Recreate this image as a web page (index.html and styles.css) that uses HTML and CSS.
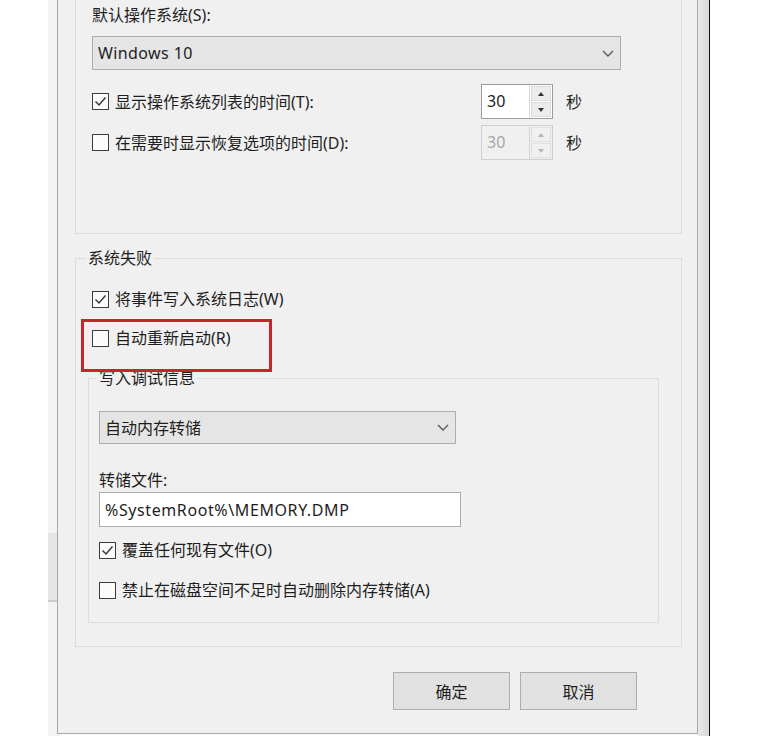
FILE: index.html
```html
<!DOCTYPE html>
<html lang="zh-CN">
<head>
    <meta charset="UTF-8">
    <meta name="viewport" content="width=device-width, initial-scale=1.0">
    <title>启动和故障恢复</title>
    <link rel="stylesheet" href="styles.css">
</head>
<body>
    <div class="back-window">
        <div class="back-tab"></div>
    </div>

    <div class="dialog">
        <div class="group group-boot">
            <div class="field-label">默认操作系统(S):</div>
            <div class="select select-os">
                <span class="latin">Windows 10</span>
                <svg class="chevron" width="12" height="7" viewBox="0 0 12 7"><polyline points="1,1 6,6 11,1" /></svg>
            </div>
            <div class="timer-row">
                <label class="check timer-check">
                    <span class="box"><svg width="15" height="15" viewBox="0 0 15 15"><polyline points="2.5,7.5 6,11 12.5,3.5" /></svg></span>
                    显示操作系统列表的时间(T):
                </label>
                <div class="spinner">
                    <span class="spin-value">30</span>
                    <span class="spin-buttons">
                        <span class="spin-btn"><span class="arrow-up"></span></span>
                        <span class="spin-btn"><span class="arrow-down"></span></span>
                    </span>
                </div>
                <span class="unit">秒</span>
            </div>
            <div class="timer-row">
                <label class="check timer-check">
                    <span class="box"></span>
                    在需要时显示恢复选项的时间(D):
                </label>
                <div class="spinner disabled">
                    <span class="spin-value">30</span>
                    <span class="spin-buttons">
                        <span class="spin-btn"><span class="arrow-up"></span></span>
                        <span class="spin-btn"><span class="arrow-down"></span></span>
                    </span>
                </div>
                <span class="unit">秒</span>
            </div>
        </div>

        <fieldset class="group group-failure">
            <legend>系统失败</legend>
            <label class="check">
                <span class="box"><svg width="15" height="15" viewBox="0 0 15 15"><polyline points="2.5,7.5 6,11 12.5,3.5" /></svg></span>
                将事件写入系统日志(W)
            </label>
            <label class="check check-restart">
                <span class="box"></span>
                自动重新启动(R)
            </label>

            <fieldset class="group group-debug">
                <legend>写入调试信息</legend>
                <div class="select select-dump">
                    <span>自动内存转储</span>
                    <svg class="chevron" width="12" height="7" viewBox="0 0 12 7"><polyline points="1,1 6,6 11,1" /></svg>
                </div>
                <div class="field-label dump-label">转储文件:</div>
                <input class="path-input" type="text" value="%SystemRoot%\MEMORY.DMP" readonly>
                <label class="check check-overwrite">
                    <span class="box"><svg width="15" height="15" viewBox="0 0 15 15"><polyline points="2.5,7.5 6,11 12.5,3.5" /></svg></span>
                    覆盖任何现有文件(O)
                </label>
                <label class="check check-lowspace">
                    <span class="box"></span>
                    禁止在磁盘空间不足时自动删除内存转储(A)
                </label>
            </fieldset>
        </fieldset>

        <div class="actions">
            <button class="btn">确定</button>
            <button class="btn">取消</button>
        </div>

        <div class="highlight"></div>
    </div>

    <div class="frame-edge"></div>
</body>
</html>
```

FILE: styles.css
```css
* {
    box-sizing: border-box;
}
body {
    margin: 0;
    width: 779px;
    height: 736px;
    overflow: hidden;
    position: relative;
    background-color: #fff;
    font-family: "Noto Sans", "Noto Sans CJK SC", sans-serif;
    font-size: 16px;
    line-height: 20px;
    color: #1e1e1e;
}

/* window peeking out behind the dialog */
.back-window {
    position: absolute;
    left: 48px;
    top: 0;
    width: 12px;
    height: 736px;
    background-color: #f3f3f3;
}
.back-tab {
    margin-top: 533px;
    height: 69px;
    background-color: #e5e5e5;
    border-bottom: 2px solid #cdcdcd;
}

.dialog {
    position: absolute;
    left: 57px;
    top: -14px;
    width: 641px;
    height: 748px;
    display: flex;
    flex-direction: column;
    padding: 8px 15px 0 17px;
    background-color: #f0f0f0;
    border: 1px solid #a8a8a8;
    border-top: none;
}
.frame-edge {
    position: absolute;
    left: 698px;
    top: 0;
    width: 12px;
    height: 736px;
    background: linear-gradient(to right, #e9e9e9, #d9d9d9);
    border-right: 1px solid #111;
}

.group {
    margin: 0;
    border: 1px solid #dcdcdc;
    min-width: 0;
}
.group legend {
    padding: 0 2px;
    line-height: 20px;
}

.group-boot {
    height: 240px;
    padding: 10px 0 0 16px;
}
.field-label {
    height: 20px;
}

.select {
    display: flex;
    align-items: center;
    justify-content: space-between;
    padding: 0 6px 0 5px;
    background-color: #e5e5e5;
    border: 1px solid #adadad;
}
.select-os {
    width: 529px;
    height: 34px;
    margin-top: 11px;
}
.latin {
    letter-spacing: 0.4px;
}
.chevron polyline {
    fill: none;
    stroke: #5a5a5a;
    stroke-width: 1.4;
}

.timer-row {
    display: flex;
    align-items: center;
    height: 35px;
    margin-top: 6px;
}
.select-os + .timer-row {
    margin-top: 14px;
}
.timer-check {
    width: 389px;
}

.check {
    display: flex;
    align-items: center;
    gap: 6px;
    height: 20px;
}
.box {
    width: 17px;
    height: 17px;
    flex: none;
    display: flex;
    align-items: center;
    justify-content: center;
    background-color: #fbfbfb;
    border: 1px solid #3c3c3c;
}
.box polyline {
    fill: none;
    stroke: #3a3a3a;
    stroke-width: 1.5;
}

.spinner {
    display: flex;
    width: 72px;
    height: 35px;
    border: 1px solid #9d9d9d;
    background-color: #fff;
}
.spin-value {
    flex: 1;
    padding: 6px 0 0 5px;
}
.spin-buttons {
    width: 23px;
    display: flex;
    flex-direction: column;
    gap: 1px;
    padding: 1px;
    background-color: #fff;
    border-left: 1px solid #d6d6d6;
}
.spin-btn {
    flex: 1;
    display: flex;
    align-items: center;
    justify-content: center;
    background-color: #ececec;
    border: 1px solid #dadada;
}
.arrow-up,
.arrow-down {
    width: 0;
    height: 0;
    border-left: 3.5px solid transparent;
    border-right: 3.5px solid transparent;
}
.arrow-up {
    border-bottom: 4px solid #333;
}
.arrow-down {
    border-top: 4px solid #333;
}
.spinner.disabled {
    border-color: #cfcfcf;
    background-color: #f0f0f0;
    color: #a6a6a6;
}
.spinner.disabled .spin-buttons {
    background-color: #f0f0f0;
}
.spinner.disabled .spin-btn {
    background-color: #f0f0f0;
    border-color: #e0e0e0;
}
.spinner.disabled .arrow-up {
    border-bottom-color: #b5b5b5;
}
.spinner.disabled .arrow-down {
    border-top-color: #b5b5b5;
}
.unit {
    margin-left: 13px;
}

.group-failure {
    margin-top: 14px;
    padding: 21px 0 23px 16px;
}
.group-failure > legend {
    margin-left: -6px;
}
.check-restart {
    margin-top: 19px;
}

.group-debug {
    width: 571px;
    margin-top: 20px;
    margin-left: -4px;
    padding: 23px 0 22px 10px;
}
.group-debug > legend {
    margin-left: -2px;
}
.select-dump {
    width: 357px;
    height: 33px;
}
.dump-label {
    margin-top: 26px;
}
.path-input {
    display: block;
    width: 362px;
    height: 35px;
    margin-top: 2px;
    padding: 0 5px;
    font-family: inherit;
    font-size: 16px;
    letter-spacing: 0.6px;
    color: #1e1e1e;
    background-color: #fff;
    border: 1px solid #acacac;
    outline: none;
}
.check-overwrite {
    margin-top: 13px;
}
.check-lowspace {
    margin-top: 20px;
}

.actions {
    display: flex;
    justify-content: flex-end;
    gap: 10px;
    margin-top: 25px;
    margin-right: 45px;
}
.btn {
    width: 117px;
    height: 38px;
    font-family: inherit;
    font-size: 16px;
    color: #1e1e1e;
    background-color: #e1e1e1;
    border: 1px solid #adadad;
    padding: 0;
}

/* red annotation box */
.highlight {
    position: absolute;
    left: 23px;
    top: 333px;
    width: 191px;
    height: 53px;
    border: 3px solid #c4262b;
}
```
